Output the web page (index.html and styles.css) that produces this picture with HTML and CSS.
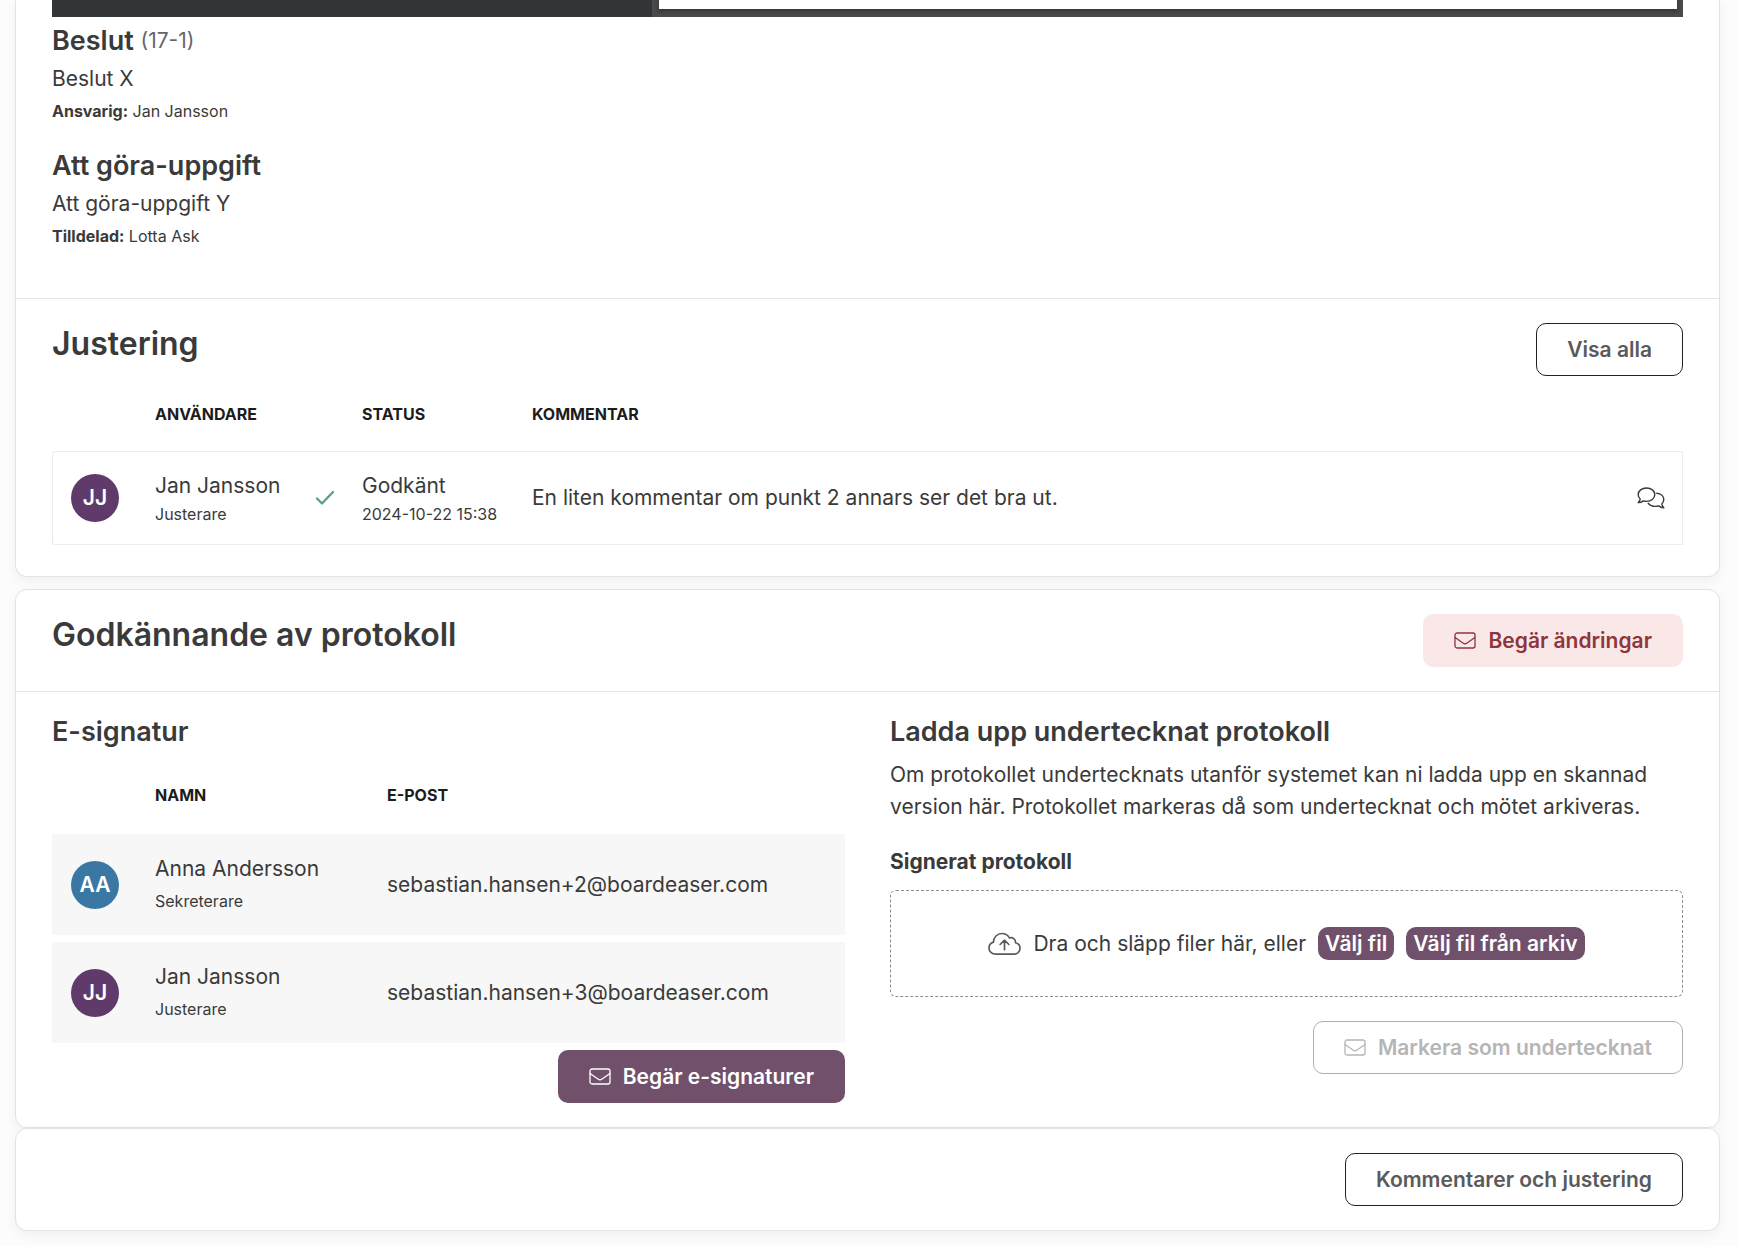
FILE: index.html
```
<!DOCTYPE html>
<html lang="sv">
<head>
    <meta charset="utf-8">
    <title>Protokoll</title>
    <link rel="stylesheet" href="styles.css">
</head>
<body>
    <main class="page">
        <!-- Protokoll och justering -->
        <section class="card card-first">
            <div class="card-section minutes">
                <div class="pdf-viewer">
                    <div class="pdf-sidebar"></div>
                    <div class="pdf-pages"><div class="pdf-page"></div></div>
                </div>
                <article class="item">
                    <h3>Beslut <small>(17-1)</small></h3>
                    <p>Beslut X</p>
                    <p class="meta"><strong>Ansvarig:</strong> Jan Jansson</p>
                </article>
                <article class="item">
                    <h3>Att göra-uppgift</h3>
                    <p>Att göra-uppgift Y</p>
                    <p class="meta"><strong>Tilldelad:</strong> Lotta Ask</p>
                </article>
            </div>
            <div class="card-section review">
                <div class="section-header">
                    <h2>Justering</h2>
                    <button type="button" class="btn btn-outline">Visa alla</button>
                </div>
                <table class="table review-table">
                    <thead>
                        <tr>
                            <th class="col-avatar"></th>
                            <th class="col-user">Användare</th>
                            <th class="col-check"></th>
                            <th class="col-status">Status</th>
                            <th>Kommentar</th>
                            <th class="col-action"></th>
                        </tr>
                    </thead>
                    <tbody>
                        <tr>
                            <td class="col-avatar"><span class="avatar avatar-purple">JJ</span></td>
                            <td class="two-lines">Jan Jansson<span class="sub">Justerare</span></td>
                            <td class="col-check">
                                <svg class="icon-check" viewBox="0 0 20 16"><path d="M2 8.5l5 5L18 2"/></svg>
                            </td>
                            <td class="two-lines">Godkänt<span class="sub">2024-10-22 15:38</span></td>
                            <td>En liten kommentar om punkt 2 annars ser det bra ut.</td>
                            <td class="col-action">
                                <button type="button" class="icon-btn" aria-label="Kommentarer">
                                    <svg class="icon-comments" viewBox="0 0 28 22"><path d="M9.500 1C4.800 1 1.200 3.900 1.200 7.600c0 1.900.8 3.400 2 4.500-.2 1.500-1 2.600-2 3.500 2 .1 3.700-.6 5-1.700 1 .3 2.100.5 3.300.5 4.700 0 8.300-2.900 8.300-6.800S14.200 1 9.500 1z"/><path d="M19.800 6.300c4.100.3 7 2.900 7 6.300 0 1.900-.8 3.200-2 4.300.2 1.500 1 2.700 2 3.800-2 .1-3.700-.7-5-1.800-1 .3-2.100.5-3.300.5-3.200 0-5.800-1.200-7.300-3.100"/></svg>
                                </button>
                            </td>
                        </tr>
                    </tbody>
                </table>
            </div>
        </section>

        <!-- Godkännande -->
        <section class="card">
            <div class="card-section">
                <div class="section-header">
                    <h2>Godkännande av protokoll</h2>
                    <button type="button" class="btn btn-danger">
                        <svg class="icon-mail" viewBox="0 0 22 18"><rect x="1" y="1" width="20" height="15" rx="2"/><path d="M1 5.500l8 5.500c1.200.9 2.800.9 4 0l8-5.500"/></svg>
                        Begär ändringar
                    </button>
                </div>
            </div>
            <div class="card-section columns">
                <div class="column">
                    <h3>E-signatur</h3>
                    <table class="table sign-table">
                        <thead>
                            <tr>
                                <th class="col-avatar"></th>
                                <th class="col-name">Namn</th>
                                <th>E-post</th>
                            </tr>
                        </thead>
                        <tbody>
                            <tr>
                                <td class="col-avatar"><span class="avatar avatar-blue">AA</span></td>
                                <td>Anna Andersson<span class="sub">Sekreterare</span></td>
                                <td>sebastian.hansen+2@boardeaser.com</td>
                            </tr>
                            <tr>
                                <td class="col-avatar"><span class="avatar avatar-purple">JJ</span></td>
                                <td>Jan Jansson<span class="sub">Justerare</span></td>
                                <td>sebastian.hansen+3@boardeaser.com</td>
                            </tr>
                        </tbody>
                    </table>
                    <div class="actions">
                        <button type="button" class="btn btn-primary">
                            <svg class="icon-mail" viewBox="0 0 22 18"><rect x="1" y="1" width="20" height="15" rx="2"/><path d="M1 5.500l8 5.500c1.200.9 2.800.9 4 0l8-5.500"/></svg>
                            Begär e-signaturer
                        </button>
                    </div>
                </div>
                <div class="column">
                    <h3>Ladda upp undertecknat protokoll</h3>
                    <p class="intro">Om protokollet undertecknats utanför systemet kan ni ladda upp en skannad version här. Protokollet markeras då som undertecknat och mötet arkiveras.</p>
                    <h4>Signerat protokoll</h4>
                    <div class="dropzone">
                        <svg class="icon-cloud" viewBox="0 0 34 24"><path d="M8 22.500C4 22.500 1 19.800 1 16.200c0-3 1.900-5.300 4.600-6.100C5.700 5 9.500 1.200 14.300 1.200c3.400 0 6.300 1.800 7.800 4.600 3.300-1.200 6.600 1.200 6.200 4.900 2.700.7 4.700 3 4.700 5.700 0 3.500-2.700 6.100-6.200 6.100z"/><path d="M17 18V8.500M12.500 12.500L17 8l4.500 4.500"/></svg>
                        <span>Dra och släpp filer här, eller</span>
                        <button type="button" class="btn-small">Välj fil</button>
                        <button type="button" class="btn-small">Välj fil från arkiv</button>
                    </div>
                    <div class="actions actions-upload">
                        <button type="button" class="btn btn-outline" disabled>
                            <svg class="icon-mail" viewBox="0 0 22 18"><rect x="1" y="1" width="20" height="15" rx="2"/><path d="M1 5.500l8 5.500c1.200.9 2.800.9 4 0l8-5.500"/></svg>
                            Markera som undertecknat
                        </button>
                    </div>
                </div>
            </div>
        </section>

        <section class="card card-footer">
            <button type="button" class="btn btn-outline">Kommentarer och justering</button>
        </section>
    </main>
</body>
</html>
```

FILE: styles.css
```
* {
    box-sizing: border-box;
}

body {
    margin: 0;
    background-color: #fcfcfc;
    color: #3a3a3a;
    font-family: Inter, "Noto Sans", sans-serif;
    font-size: 21px;
    line-height: 32px;
}

h2, h3, h4, p {
    margin: 0;
}

.page {
    padding: 0 18px 16px 15px;
}

.card {
    background-color: #fff;
    border: 1px solid #e3e3e3;
    border-radius: 12px;
    box-shadow: 0 4px 12px rgba(0, 0, 0, 0.05);
}

.card-first {
    border-top: none;
    border-radius: 0 0 12px 12px;
    margin-bottom: 12px;
}

.card-section {
    padding: 24px 36px;
}

.card-section + .card-section {
    border-top: 1px solid #e3e3e3;
}

/* PDF viewer, only its lower edge is in view */
.pdf-viewer {
    display: flex;
    height: 17px;
    background-color: #4a4b4d;
}

.pdf-sidebar {
    width: 600px;
    background-color: #323639;
}

.pdf-pages {
    flex: 1;
    padding: 0 6px 0 7px;
}

.pdf-page {
    height: 9px;
    background-color: #fff;
    box-shadow: 0 1px 4px 1px #333;
}

.minutes {
    padding-top: 0;
    padding-bottom: 49px;
}

.item {
    padding-top: 8px;
    margin-bottom: 18px;
}

.item + .item {
    margin-bottom: 0;
}

h2 {
    font-size: 32px;
    line-height: 42px;
    font-weight: 600;
}

h3 {
    font-size: 27px;
    line-height: 32px;
    font-weight: 600;
}

h3 small {
    font-size: 21px;
    font-weight: 400;
    line-height: 24px;
    vertical-align: 2px;
    color: #666;
}

h4 {
    font-size: 21px;
    font-weight: 700;
}

.item h3 {
    margin-bottom: 1px;
}

.item p {
    line-height: 41px;
}

.item .meta {
    font-size: 16px;
    line-height: 25px;
}

.section-header {
    display: flex;
    justify-content: space-between;
    align-items: flex-start;
}

.btn {
    display: inline-flex;
    align-items: center;
    gap: 12px;
    height: 53px;
    padding: 0 30px;
    border: 1px solid transparent;
    border-radius: 10px;
    font-family: inherit;
    font-size: 21px;
    font-weight: 600;
    cursor: pointer;
}

.btn-outline {
    background-color: #fff;
    border-color: #222;
    color: #5a5a5a;
}

.btn-outline:disabled {
    border-color: #b0b0b0;
    color: #b5b5b5;
    cursor: default;
}

.btn-danger {
    background-color: #fae8e8;
    color: #8f353b;
}

.btn-primary {
    background-color: #70506a;
    color: #fff;
}

svg {
    fill: none;
    stroke: currentColor;
    stroke-linecap: round;
    stroke-linejoin: round;
    display: block;
}

.icon-mail {
    width: 22px;
    height: 18px;
    stroke-width: 1.3;
}

.icon-check {
    width: 20px;
    height: 16px;
    margin-left: auto;
    color: #5f9f80;
    stroke-width: 2.4;
}

.icon-comments {
    width: 28px;
    height: 22px;
    stroke-width: 1.4;
}

.icon-cloud {
    width: 33px;
    height: 24px;
    color: #5a5a5a;
    stroke-width: 1.7;
}

.icon-btn {
    display: block;
    margin-left: auto;
    padding: 0;
    border: none;
    background: none;
    color: inherit;
    cursor: pointer;
}

.table {
    width: 100%;
    border-collapse: separate;
    border-spacing: 0;
    table-layout: fixed;
}

th {
    padding: 0;
    color: #1c1c1c;
    font-size: 16px;
    font-weight: 700;
    text-align: left;
    text-transform: uppercase;
}

td {
    padding: 0;
    line-height: 24px;
}

.sub {
    display: block;
    padding-top: 4px;
    font-size: 16px;
}

.two-lines {
    padding-top: 4px;
}

.col-avatar {
    width: 103px;
    padding-left: 19px;
}

.avatar {
    display: flex;
    align-items: center;
    justify-content: center;
    width: 48px;
    height: 48px;
    border-radius: 50%;
    color: #fff;
    font-size: 21px;
    font-weight: 600;
}

.avatar-purple {
    background-color: #5f3a6a;
}

.avatar-blue {
    background-color: #3a77a3;
}

.review {
    padding-bottom: 31px;
}

.review-table th {
    height: 75px;
}

.review-table td {
    height: 94px;
    border: 1px solid #ececec;
    border-width: 1px 0;
}

.review-table td:first-child {
    padding-left: 18px;
    border-left-width: 1px;
    border-radius: 3px 0 0 3px;
}

.review-table td:last-child {
    border-right-width: 1px;
}

.col-user {
    width: 158px;
}

.col-check {
    width: 49px;
    padding-right: 27px;
}

.col-status {
    width: 170px;
}

.col-action {
    width: 60px;
    padding-right: 17px;
}

.columns {
    display: grid;
    grid-template-columns: 1fr 1fr;
    gap: 45px;
}

.sign-table {
    border-spacing: 0 7px;
    margin-top: 8px;
}

.sign-table th {
    height: 64px;
}

.sign-table td {
    height: 101px;
    background-color: #f7f7f7;
}

.sign-table .sub {
    padding-top: 8px;
}

.col-name {
    width: 232px;
}

.actions {
    display: flex;
    justify-content: flex-end;
}

.intro {
    margin: 11px 0 23px;
}

.dropzone {
    display: flex;
    align-items: center;
    justify-content: center;
    gap: 12px;
    height: 107px;
    margin-top: 12px;
    border: 1px dashed #8c8c8c;
    border-radius: 6px;
}

.btn-small {
    height: 33px;
    padding: 0 7px;
    border: none;
    border-radius: 10px;
    background-color: #70506a;
    color: #fff;
    font-family: inherit;
    font-size: 21px;
    font-weight: 600;
    cursor: pointer;
}

.actions-upload {
    margin-top: 24px;
}

.card-footer {
    display: flex;
    justify-content: flex-end;
    padding: 24px 36px;
}
```
